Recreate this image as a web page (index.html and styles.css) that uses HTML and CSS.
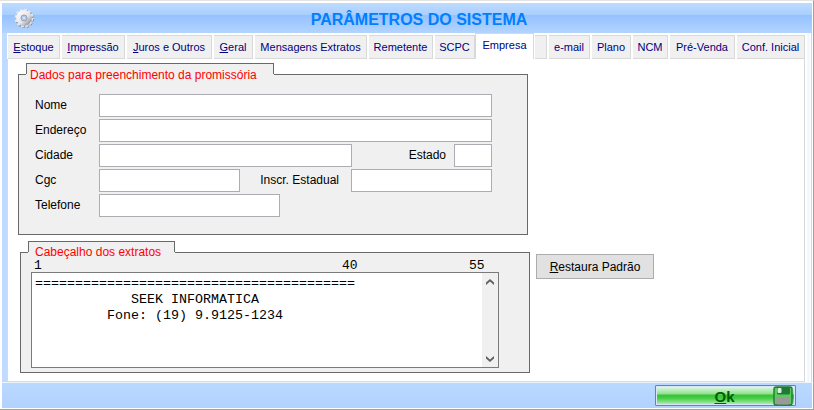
FILE: index.html
```html
<!DOCTYPE html>
<html lang="pt-BR">
<head>
<meta charset="utf-8">
<title>Parâmetros do Sistema</title>
<link rel="stylesheet" href="styles.css">
</head>
<body>
<div class="window">
  <header class="titlebar">
    <svg class="gear" viewBox="0 0 20 20" aria-hidden="true">
      <defs>
        <linearGradient id="steel" x1="0" y1="0" x2="1" y2="1">
          <stop offset="0" stop-color="#fafafc"/>
          <stop offset=".6" stop-color="#e2e3e8"/>
          <stop offset="1" stop-color="#9a9ba1"/>
        </linearGradient>
      </defs>
      <circle cx="10.8" cy="11" r="8" fill="none" stroke="#7f8aa0" stroke-width="2.4" stroke-dasharray="2.3 1.89"/>
      <circle cx="10" cy="10" r="8" fill="none" stroke="#e6e6ea" stroke-width="2.8" stroke-dasharray="2.5 1.69"/>
      <circle cx="10" cy="10" r="5.4" fill="none" stroke="url(#steel)" stroke-width="5"/>
      <circle cx="10" cy="10" r="3" fill="#b4d2fa" stroke="#9a9faa" stroke-width="1"/>
      <circle cx="10" cy="10" r="1.5" fill="#e3effd" stroke="#a0b4d0" stroke-width=".6"/>
    </svg>
    <h1 class="title">PARÂMETROS DO SISTEMA</h1>
  </header>

  <main class="page">
    <nav class="tabs">
      <button class="tab" type="button"><u>E</u>stoque</button>
      <button class="tab" type="button"><u>I</u>mpressão</button>
      <button class="tab" type="button"><u>J</u>uros e Outros</button>
      <button class="tab" type="button"><u>G</u>eral</button>
      <button class="tab" type="button">Mensagens Extratos</button>
      <button class="tab" type="button">Remetente</button>
      <button class="tab" type="button">SCPC</button>
      <button class="tab tab-active" type="button">Empresa</button>
      <button class="tab" type="button"></button>
      <button class="tab" type="button">e-mail</button>
      <button class="tab" type="button">Plano</button>
      <button class="tab" type="button">NCM</button>
      <button class="tab" type="button">Pré-Venda</button>
      <button class="tab" type="button">Conf. Inicial</button>
    </nav>

    <section class="pane">
      <fieldset class="group">
        <legend class="caption caption-wide">Dados para preenchimento da promissória</legend>
        <div class="fields">
          <div class="row"><label for="nome">Nome</label><input id="nome" class="fill" type="text"></div>
          <div class="row"><label for="endereco">Endereço</label><input id="endereco" class="fill" type="text"></div>
          <div class="row">
            <label for="cidade">Cidade</label><input id="cidade" class="city" type="text">
            <label for="estado" class="second state-label">Estado</label><input id="estado" class="state" type="text">
          </div>
          <div class="row">
            <label for="cgc">Cgc</label><input id="cgc" class="code" type="text">
            <label for="inscr" class="second code-label">Inscr. Estadual</label><input id="inscr" class="code" type="text">
          </div>
          <div class="row"><label for="telefone">Telefone</label><input id="telefone" class="phone" type="text"></div>
        </div>
      </fieldset>

      <div class="lower">
        <fieldset class="group group-header">
          <legend class="caption"><label for="cabecalho">Cabeçalho dos extratos</label></legend>
          <div class="ruler"><span>1</span><span>40</span><span>55</span></div>
          <div class="editor">
            <textarea id="cabecalho" spellcheck="false">
========================================
            SEEK INFORMATICA
         Fone: (19) 9.9125-1234</textarea>
            <div class="scroll">
              <button class="arrow" type="button" aria-label="Rolar para cima"><svg viewBox="0 0 8 6"><path d="M0 6V3.6L4 0l4 3.6V6L4 2.6z" fill="#606060"/></svg></button>
              <button class="arrow" type="button" aria-label="Rolar para baixo"><svg viewBox="0 0 8 6"><path d="M0 0v2.4L4 6l4-3.6V0L4 3.4z" fill="#606060"/></svg></button>
            </div>
          </div>
        </fieldset>
        <button class="restore" type="button"><u>R</u>estaura Padrão</button>
      </div>
    </section>
  </main>

  <footer class="actions">
    <button class="ok" type="button">
      <span><u>O</u>k</span>
      <svg class="disk" viewBox="0 0 20 20" aria-hidden="true">
        <rect x="1" y="1" width="18" height="18" rx="2" fill="#5cc860" stroke="#1f7a35" stroke-width="1.4"/>
        <path d="M4 1h13v6q0 1.500-1.500 1.500h-10Q4 8.500 4 7z" fill="#1f7a35"/>
        <rect x="4.500" y="2" width="4" height="5" rx="1" fill="#d8f0d8"/>
        <rect x="3" y="11" width="14" height="7.500" rx="2" fill="#999"/>
      </svg>
    </button>
  </footer>
</div>
</body>
</html>
```
FILE: styles.css
```css
* { box-sizing: border-box; }

body {
  margin: 0;
  font-family: "Liberation Sans", Arial, sans-serif;
  font-size: 12px;
  color: #000;
}

button, input { font: inherit; color: inherit; margin: 0; padding: 0; }

.window {
  min-height: 100vh;
  display: flex;
  flex-direction: column;
  padding: 2px 1px 1px 2px;
  background: #fff;
  border-top: 1px solid #e3e3e3;
  border-right: 1px solid #a0a0a0;
  border-bottom: 1px solid #a0a0a0;
}

.titlebar {
  display: grid;
  grid-template-columns: 32px 1fr 20px;
  align-items: center;
  height: 30px;
  padding-left: 12px;
  background: linear-gradient(#bddbff 0, #a9cfff 12px, #94c2fe 12px, #b3d4ff 100%);
}

.gear { width: 20px; height: 20px; }

.title {
  margin: 0;
  padding-top: 4px;
  text-align: center;
  font-size: 16px;
  line-height: 20px;
  color: #007fff;
}

.page {
  flex: 1;
  display: flex;
  flex-direction: column;
  padding: 0 5px;
  background: linear-gradient(90deg, #bfdbff 5px, #fff 5px, #fff calc(100% - 5px), #edf5ff calc(100% - 4px), #fff calc(100% - 1px), #bfdbff calc(100% - 1px));
}

.tabs {
  display: grid;
  grid-template-columns: 52fr 63fr 85fr 39fr 112fr 64fr 40fr 56fr 12fr 41fr 39fr 35fr 65fr 68fr;
  column-gap: 2px;
  height: 26px;
  padding: 2px 2px 0 1px;
}

.tab {
  overflow: hidden;
  white-space: nowrap;
  border: 0 solid #d9d9d9;
  border-width: 1px 1px 1px 0;
  background: #f0f0f0;
  color: #000080;
  font-size: 11px;
  line-height: 20px;
}

.tab-active {
  margin: -2px -1px 0 -2px;
  padding-bottom: 3px;
  border-width: 1px 1px 0 1px;
  background: #fff;
}

.pane {
  flex: 1;
  display: flex;
  flex-direction: column;
  gap: 6px;
  margin-right: 2px;
  padding: 4px 10px 8px;
  border: 1px solid #d9d9d9;
  border-top: 0;
  background: #fff;
}

.group {
  margin: 0;
  padding: 0 0 0 12px;
  border: 1px solid #696969;
  background: #f0f0f0;
  width: 100%;
  max-width: 510px;
  min-width: 0;
}

.caption {
  position: relative;
  height: 22px;
  margin-left: -5px;
  padding: 0 7px;
  width: 147px;
  background: #f0f0f0;
  color: #f00;
  line-height: 22px;
  white-space: nowrap;
}

.caption-wide { width: 248px; padding: 0 4px; line-height: 24px; }

/* Raised outline over the upper half of the caption only */
.caption::before {
  content: "";
  position: absolute;
  inset: 0 0 50% 0;
  border: 1px solid #696969;
  border-bottom: 0;
  pointer-events: none;
}

.fields {
  display: flex;
  flex-direction: column;
  gap: 2px;
  padding: 9px 35px 17px 4px;
}

.row { display: flex; align-items: center; }
.row label { width: 64px; flex: none; line-height: 20px; padding-bottom: 2px; }

.row input {
  height: 23px;
  min-width: 0;
  border: 1px solid #abadb3;
  background: #fff;
  padding: 0 3px;
}

.row .fill { flex: 1; }
.row .second { margin-left: auto; width: auto; }
.row .state-label { padding-right: 8px; }
.row .code-label { padding-right: 12px; }
.city { width: 253px; }
.state { width: 38px; }
.code { width: 141px; }
.phone { width: 181px; }

.lower {
  display: flex;
  align-items: flex-start;
  gap: 6px;
  padding-left: 2px;
}

.group-header { padding: 0 30px 4px 10px; }
.group-header .caption { margin-left: -3px; }
.caption label { display: block; line-height: 22px; }

.ruler {
  position: relative;
  display: grid;
  grid-template-columns: 308px 127px 1fr;
  margin-top: -3px;
  padding-left: 3px;
  font-family: "Liberation Mono", "Courier New", monospace;
  font-size: 13px;
  line-height: 12px;
}

.editor {
  display: flex;
  height: 96px;
  border: 1px solid #7a7a7a;
  background: #fff;
}

.editor textarea {
  flex: 1;
  min-width: 0;
  margin: 0;
  padding: 3px 3px 0;
  border: 0;
  resize: none;
  overflow: hidden;
  background: #fff;
  color: #000;
  font-family: "Liberation Mono", "Courier New", monospace;
  line-height: 16px;
}

.scroll {
  width: 16px;
  display: flex;
  flex-direction: column;
  justify-content: space-between;
  background: #f0f0f0;
}

.arrow {
  display: grid;
  place-items: center;
  height: 17px;
  border: 0;
  background: none;
}

.arrow svg { width: 8px; height: 6px; }

.restore {
  flex: none;
  width: 118px;
  height: 25px;
  margin-top: 13px;
  border: 1px solid #adadad;
  background: #e1e1e1;
}

.actions {
  display: flex;
  justify-content: flex-end;
  padding: 2px 16px 2px;
  background: linear-gradient(#bbd9ff, #b1d2ff);
  border-top: 1px solid #edf3fb;
}

.ok {
  display: grid;
  grid-template-columns: 20px 1fr 20px;
  align-items: center;
  width: 141px;
  height: 21px;
  padding-right: 2px;
  border: 1px solid #5f84b8;
  border-radius: 1px;
  box-shadow: inset 0 0 0 1px #d5e8fa;
  background: linear-gradient(#e9fbe9 0, #8fe08f 8px, #35c435 9px, #42cb42 12px, #bdf0bd 100%);
  color: #006000;
  font-size: 15px;
  font-weight: bold;
}

.ok span { grid-column: 2; }
.disk { width: 20px; height: 20px; }
```
